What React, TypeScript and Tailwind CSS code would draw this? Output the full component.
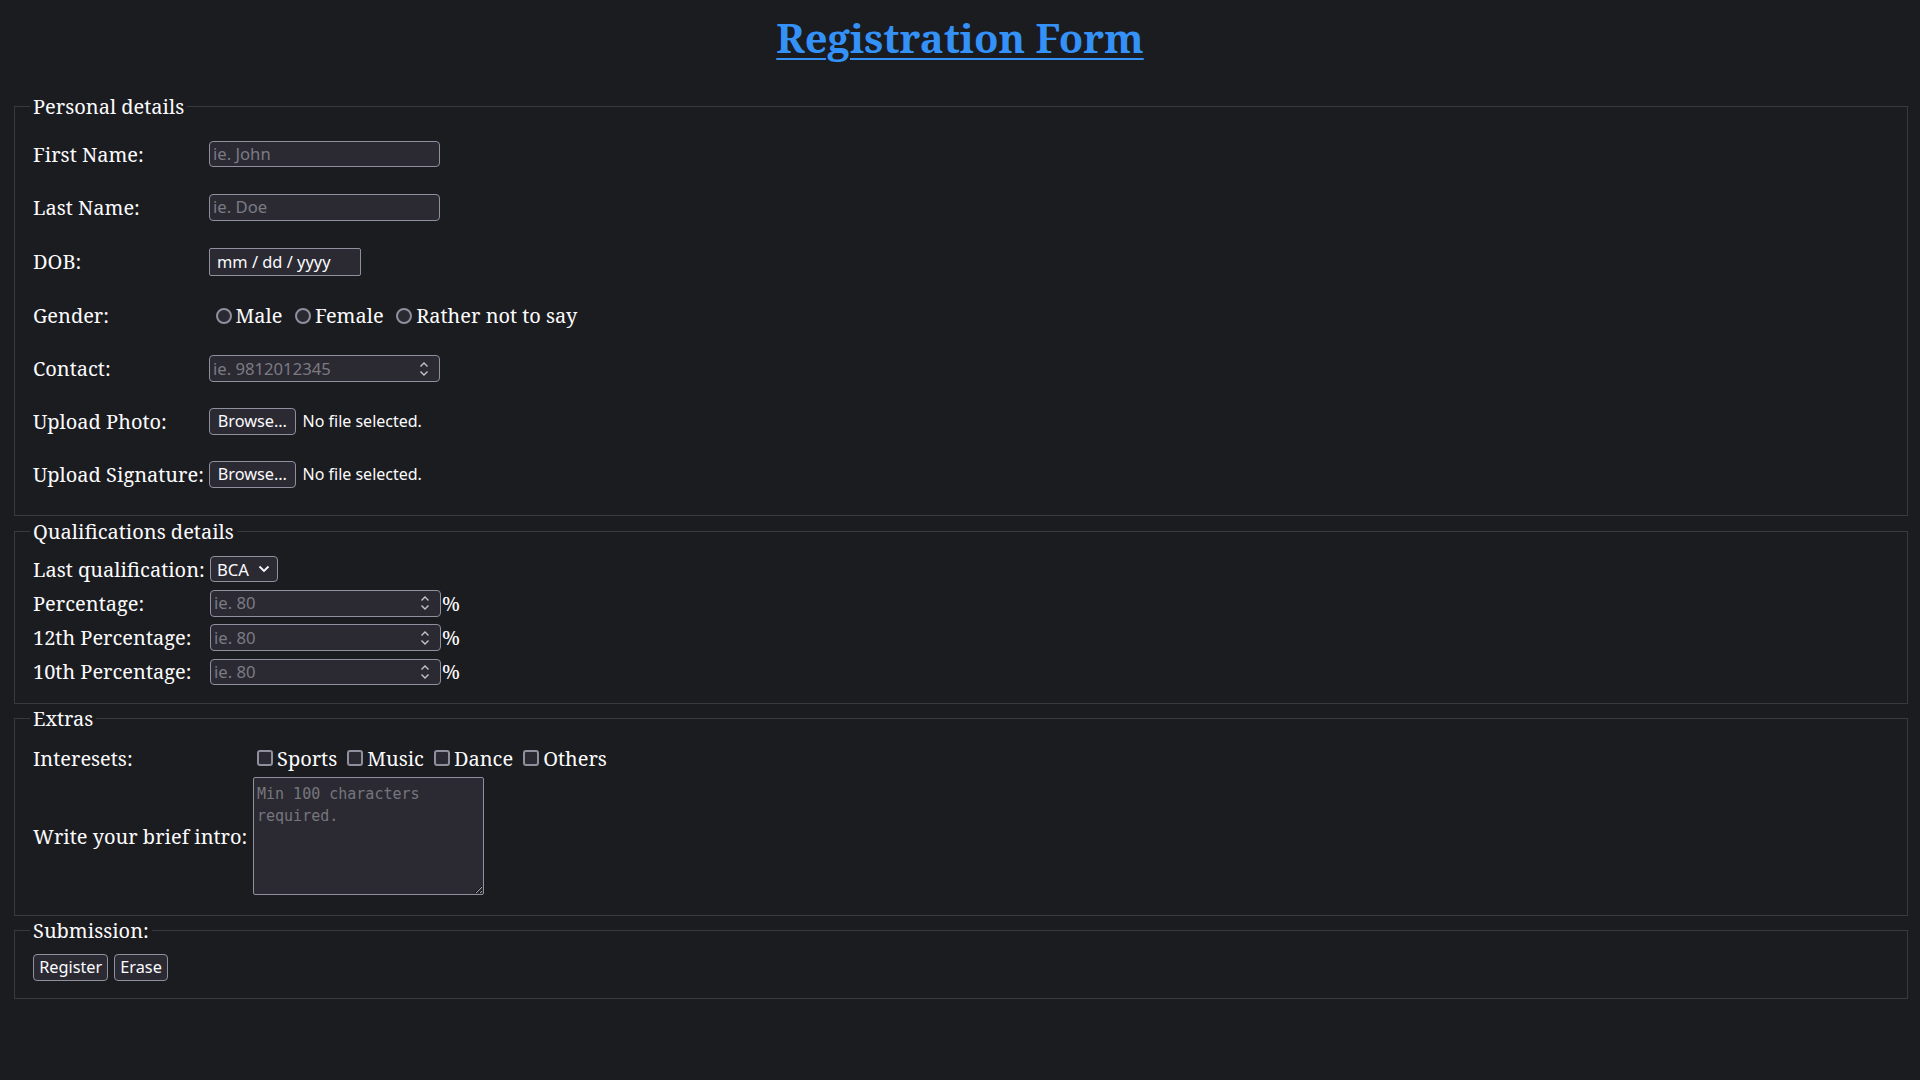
import React from "react";

const serif = "font-['Noto_Serif','DejaVu_Serif',serif]";

function Spinner() {
  return (
    <svg width="10" height="18" viewBox="0 0 10 18" className="ml-auto mr-[10px] shrink-0">
      <path d="M1.5 6.5 L5 3 L8.5 6.5" fill="none" stroke="#c4c4cc" strokeWidth="1.4" />
      <path d="M1.5 11.5 L5 15 L8.5 11.5" fill="none" stroke="#c4c4cc" strokeWidth="1.4" />
    </svg>
  );
}

function TextBox({ placeholder, number }: { placeholder: string; number?: boolean }) {
  return (
    <div className="flex h-[26.5px] w-[231px] shrink-0 items-center rounded-[4px] border border-[#8f8f9d] bg-[#2b2a33] pl-[3px]">
      <input
        placeholder={placeholder}
        className="min-w-0 flex-1 bg-transparent font-['Noto_Sans',sans-serif] text-[16.67px] leading-[22px] text-[#fbfbfe] outline-none placeholder:text-[#7b7b83]"
      />
      {number ? <Spinner /> : null}
    </div>
  );
}

function Radio({ label }: { label: string }) {
  return (
    <div className="flex items-center">
      <span className="ml-[6.5px] mr-[4px] box-border h-[16px] w-[16px] rounded-full border-2 border-[#8f8f9d] bg-[#2b2a33]" />
      <span>{label}</span>
    </div>
  );
}

function Check({ label }: { label: string }) {
  return (
    <div className="flex items-center">
      <span className="ml-[4px] mr-[4px] box-border h-[16px] w-[16px] rounded-[3px] border-2 border-[#8f8f9d] bg-[#2b2a33]" />
      <span>{label}</span>
    </div>
  );
}

function FileRow() {
  return (
    <div className="flex items-center font-['Noto_Sans',sans-serif] text-[16px]">
      <span className="flex h-[27px] w-[86.5px] items-center justify-center rounded-[4px] border border-[#8f8f9d] bg-[#2b2a33] text-[16.3px] text-[#fbfbfe]">
        Browse…
      </span>
      <span className="ml-[7px] text-[#fbfbfe]">No file selected.</span>
    </div>
  );
}

export default function App() {
  return (
    <div className={`min-h-screen bg-[#1b1c1f] px-[10px] pt-[11px] text-[#fbfbfe] ${serif}`}>
      <h1 className="mb-[28px] text-center text-[40px] font-bold leading-[54px]">
        <a href="#" className="text-[#3391f7] underline decoration-2 underline-offset-[5px]">
          Registration Form
        </a>
      </h1>

      <fieldset className="ml-[4px] mr-[2px] border border-[#393a3f] px-[15px] pb-[14px] pt-[7.5px]">
        <legend className="px-[3px] text-[20px] leading-[27px]">Personal details</legend>
        <div className="pl-[3px] text-[20px] leading-[27px]">
          <div className="flex h-[53px] items-center">
            <div className="w-[176px] shrink-0">First Name:</div>
            <TextBox placeholder="ie. John" />
          </div>
          <div className="flex h-[53.5px] items-center">
            <div className="w-[176px] shrink-0">Last Name:</div>
            <TextBox placeholder="ie. Doe" />
          </div>
          <div className="flex h-[55px] items-center">
            <div className="w-[176px] shrink-0">DOB:</div>
            <div className="flex h-[28px] w-[151.5px] items-center rounded-[2px] border border-[#8f8f9d] bg-[#2b2a33] pl-[7px] font-['Noto_Sans',sans-serif] text-[16.4px] text-[#fbfbfe]">
              mm / dd / yyyy
            </div>
          </div>
          <div className="flex h-[53.5px] items-center">
            <div className="w-[176px] shrink-0">Gender:</div>
            <div className="flex items-center gap-[6px]">
              <Radio label="Male" />
              <Radio label="Female" />
              <Radio label="Rather not to say" />
            </div>
          </div>
          <div className="flex h-[52px] items-center">
            <div className="w-[176px] shrink-0">Contact:</div>
            <TextBox placeholder="ie. 9812012345" number />
          </div>
          <div className="flex h-[53px] items-center">
            <div className="w-[176px] shrink-0">Upload Photo:</div>
            <FileRow />
          </div>
          <div className="flex h-[53px] items-center">
            <div className="w-[176px] shrink-0 whitespace-nowrap">Upload Signature:</div>
            <FileRow />
          </div>
        </div>
      </fieldset>

      <fieldset className="ml-[4px] mr-[2px] mt-[2px] border border-[#393a3f] px-[15px] pb-[13.5px] pt-[7.5px]">
        <legend className="px-[3px] text-[20px] leading-[27px]">Qualifications details</legend>
        <div className="pl-[3px] text-[20px] leading-[27px]">
          <div className="flex h-[34.25px] items-center">
            <div className="w-[177px] shrink-0 whitespace-nowrap">Last qualification:</div>
            <div className="flex h-[26.5px] w-[68px] items-center rounded-[4px] border border-[#8f8f9d] bg-[#2b2a33] pl-[6px] font-['Noto_Sans',sans-serif] text-[16.67px] text-[#fbfbfe]">
              <span>BCA</span>
              <svg width="12" height="8" viewBox="0 0 12 8" className="ml-auto mr-[7px]">
                <path d="M1.5 1.5 L6 6 L10.5 1.5" fill="none" stroke="#fbfbfe" strokeWidth="1.8" />
              </svg>
            </div>
          </div>
          {["Percentage:", "12th Percentage:", "10th Percentage:"].map((l) => (
            <div key={l} className="flex h-[34.25px] items-center">
              <div className="w-[177px] shrink-0 whitespace-nowrap">{l}</div>
              <TextBox placeholder="ie. 80" number />
              <span className="ml-[1px]">%</span>
            </div>
          ))}
        </div>
      </fieldset>

      <fieldset className="ml-[4px] mr-[2px] mt-[1px] border border-[#393a3f] px-[15px] pb-[19.5px] pt-[7.5px]">
        <legend className="px-[3px] text-[20px] leading-[27px]">Extras</legend>
        <div className="pl-[3px] text-[20px] leading-[27px]">
          <div className="flex h-[38px] items-center">
            <div className="w-[220px] shrink-0">Interesets:</div>
            <div className="flex items-center gap-[6px]">
              <Check label="Sports" />
              <Check label="Music" />
              <Check label="Dance" />
              <Check label="Others" />
            </div>
          </div>
          <div className="flex h-[118px] items-center">
            <div className="w-[220px] shrink-0 whitespace-nowrap">Write your brief intro:</div>
            <textarea
              placeholder="Min 100 characters required."
              className="block h-[118px] w-[230.5px] rounded-[2px] border border-[#8f8f9d] bg-[#2b2a33] px-[3px] pt-[5px] font-['DejaVu_Sans_Mono',monospace] text-[15px] leading-[22px] text-[#fbfbfe] outline-none placeholder:text-[#76767d]"
            />
          </div>
        </div>
      </fieldset>

      <fieldset className="ml-[4px] mr-[2px] mt-[1px] border border-[#393a3f] px-[15px] pb-[13.5px] pt-[7.5px]">
        <legend className="px-[3px] text-[20px] leading-[27px]">Submission:</legend>
        <div className="flex h-[33.3px] items-center gap-[5.7px] pl-[3px] font-['Noto_Sans',sans-serif] text-[16.3px]">
          <button className="flex h-[26.7px] w-[75.4px] items-center justify-center rounded-[4px] border border-[#8f8f9d] bg-[#2b2a33] text-[#fbfbfe]">
            Register
          </button>
          <button className="flex h-[26.7px] w-[54px] items-center justify-center rounded-[4px] border border-[#8f8f9d] bg-[#2b2a33] text-[#fbfbfe]">
            Erase
          </button>
        </div>
      </fieldset>
    </div>
  );
}
